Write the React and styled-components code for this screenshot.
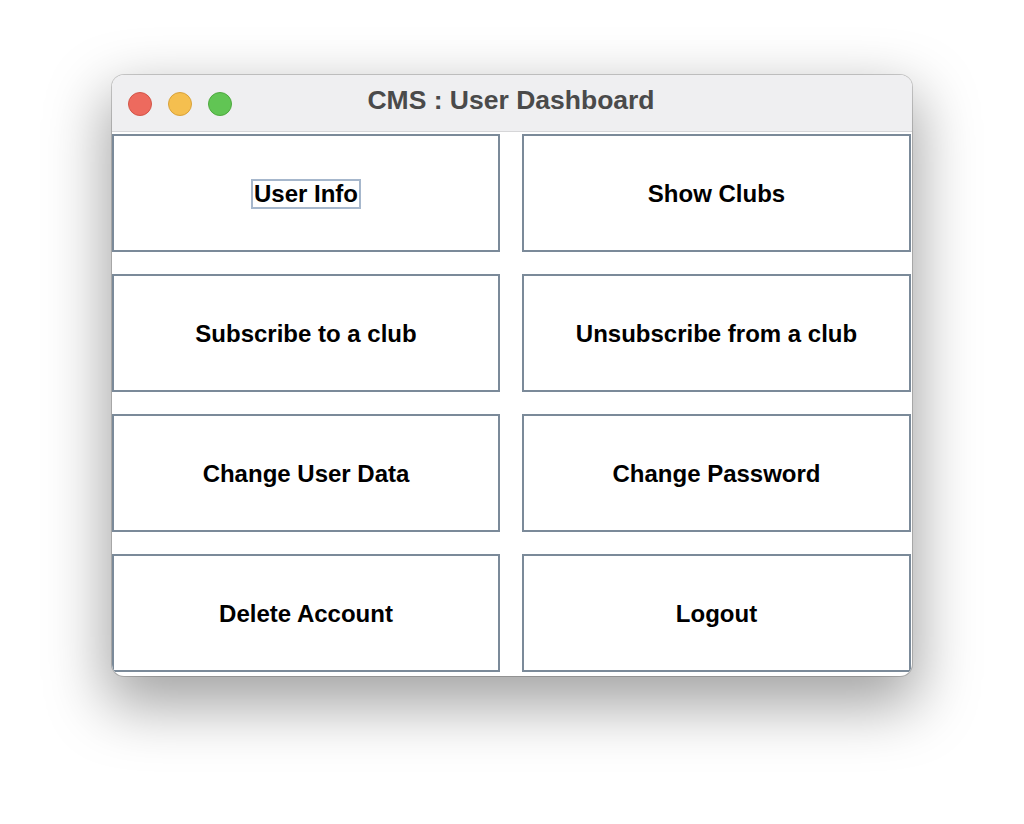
import React from 'react';
import styled, { createGlobalStyle } from 'styled-components';

const GlobalStyle = createGlobalStyle`
  html, body {
    margin: 0;
    padding: 0;
    background: #ffffff;
  }
  body {
    font-family: "Liberation Sans", Arial, Helvetica, sans-serif;
  }
`;

const actions = [
  'User Info',
  'Show Clubs',
  'Subscribe to a club',
  'Unsubscribe from a club',
  'Change User Data',
  'Change Password',
  'Delete Account',
  'Logout',
];

export default function App() {
  return (
    <>
      <GlobalStyle />
      <Desktop>
        <Window>
          <TitleBar>
            <Lights>
              <Light color="#ed6a5e" ring="#d35548" />
              <Light color="#f5bf4f" ring="#d9a23a" />
              <Light color="#61c554" ring="#4ea93f" />
            </Lights>
            <Title>CMS : User Dashboard</Title>
            <span />
          </TitleBar>
          <Content>
            {actions.map((label, i) => (
              <ActionButton key={label}>
                <Label focused={i === 0}>{label}</Label>
              </ActionButton>
            ))}
          </Content>
        </Window>
      </Desktop>
    </>
  );
}

const Desktop = styled.div`
  display: flex;
  justify-content: center;
  padding-top: 75px;
  height: 824px;
  box-sizing: border-box;
`;

const Window = styled.div`
  width: 800px;
  height: 601px;
  border-radius: 12px;
  overflow: hidden;
  background: #ffffff;
  box-shadow: 0 0 0 1px rgba(0, 0, 0, 0.18), 0 24px 60px 6px rgba(0, 0, 0, 0.36);
  display: flex;
  flex-direction: column;
`;

const TitleBar = styled.div`
  height: 57px;
  box-sizing: border-box;
  background: #efeff1;
  border-bottom: 1px solid #d6d6d8;
  display: grid;
  grid-template-columns: 1fr auto 1fr;
  align-items: center;
  padding: 0 16px;
`;

const Lights = styled.div`
  display: flex;
  gap: 16px;
  margin-top: 1px;
`;

const Light = styled.span`
  width: 24px;
  height: 24px;
  border-radius: 50%;
  box-sizing: border-box;
  background: ${(p) => p.color};
  border: 1px solid ${(p) => p.ring};
`;

const Title = styled.div`
  font-size: 26.5px;
  font-weight: bold;
  color: #4a4a4a;
  margin-top: -5px;
  margin-right: 2px;
`;

const Content = styled.div`
  flex: 1;
  display: grid;
  grid-template-columns: 388px 389px;
  grid-auto-rows: 118px;
  column-gap: 22px;
  row-gap: 22px;
  padding-top: 2px;
  align-content: start;
`;

const ActionButton = styled.button`
  box-sizing: border-box;
  margin: 0;
  padding: 0;
  background: #ffffff;
  border: 2px solid #7b8a99;
  display: flex;
  align-items: center;
  justify-content: center;
  font-family: "Liberation Sans", Arial, Helvetica, sans-serif;
  font-size: 24px;
  font-weight: bold;
  color: #000000;
  cursor: pointer;
`;

const Label = styled.span`
  margin-top: 2px;
  padding: 1px 1px;
  border: 2px solid ${(p) => (p.focused ? '#a6b7cc' : 'transparent')};
  line-height: 24px;
`;
